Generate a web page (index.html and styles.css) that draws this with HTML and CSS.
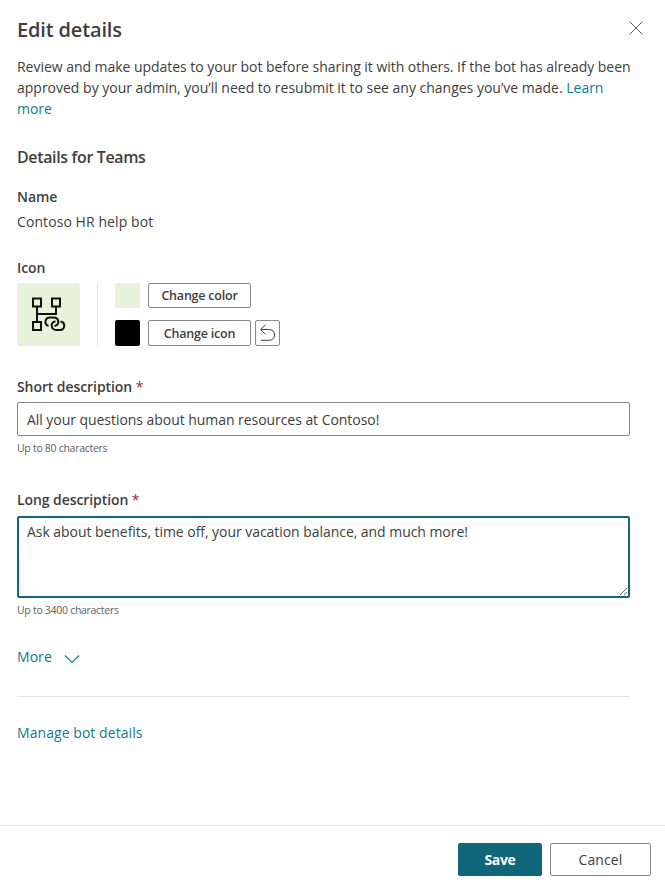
FILE: index.html
```html
<!DOCTYPE html>
<html lang="en">
<head>
<meta charset="utf-8">
<title>Edit details</title>
<link rel="stylesheet" href="styles.css">
</head>
<body>
<div class="panel">
  <main class="content">
    <header class="header">
      <h1 class="title">Edit details</h1>
      <button class="close" aria-label="Close"><svg width="14" height="14" viewBox="0 0 14 14"><path d="M.7.7l12.6 12.6M13.3.7L.7 13.3"/></svg></button>
    </header>
    <p class="intro"><span class="line-one">Review and make updates to your bot before sharing it with others. If the bot has already been</span><br><span class="line-two">approved by your admin, you’ll need to resubmit it to see any changes you’ve made. <a href="#">Learn</a></span><br><a href="#">more</a></p>
    <h2 class="section-title">Details for Teams</h2>
    <h3 class="label name-label">Name</h3>
    <p class="value">Contoso HR help bot</p>
    <h3 class="label icon-label">Icon</h3>
    <div class="icon-row">
      <div class="bot-icon">
        <svg width="36" height="36" viewBox="0 0 36 36">
          <path d="M2 1.500h8V9.500H2zM21 1.500h8V9.500h-8zM2 25h8v8H2zM6 9.500V25M6 17h19V9.500"/>
          <path d="M17.500 29C13 27.500 13.500 20.500 19 20.500h3.500c6 0 6.500 8 1 8.500"/>
          <path d="M29.500 24.500c5.500 1 4.500 8.500-.5 8.500h-3.500c-6 0-6.500-8.500-1-8.500"/>
        </svg>
      </div>
      <div class="icon-actions">
        <div class="action"><span class="swatch green"></span><button class="button small color-button">Change color</button></div>
        <div class="action"><span class="swatch black"></span><button class="button small icon-button">Change icon</button><button class="button undo" aria-label="Reset icon"><svg width="17" height="18" viewBox="0 0 17 18"><path d="M6.500.700L1.700 5.500l4.800 4.800M2 5.500h8.300c7 0 7 10.800 0 10.800H2"/></svg></button></div>
      </div>
    </div>
    <label class="label short-label" for="short">Short description <span class="required">*</span></label>
    <input class="field short-field" id="short" value="All your questions about human resources at Contoso!">
    <p class="hint">Up to 80 characters</p>
    <label class="label long-label" for="long">Long description <span class="required">*</span></label>
    <textarea class="field long-field" id="long">Ask about benefits, time off, your vacation balance, and much more!</textarea>
    <p class="hint long-hint">Up to 3400 characters</p>
    <a class="more" href="#">More<svg width="16" height="10" viewBox="0 0 16 10"><path d="M1 1.500l7 7 7-7"/></svg></a>
    <div class="divider"></div>
    <a class="manage" href="#">Manage bot details</a>
  </main>
  <footer class="footer">
    <button class="button save">Save</button>
    <button class="button cancel">Cancel</button>
  </footer>
</div>
</body>
</html>
```

FILE: styles.css
```css
* { box-sizing: border-box; }
body {
  margin: 0;
  background: #fff;
  color: #403e3d;
  font: 14px/21px "Open Sans", "Noto Sans", sans-serif;
  letter-spacing: -0.05px;
}
h1, h2, h3, p { margin: 0; }
a { color: #0f7b90; text-decoration: none; }
button, input, textarea { font: inherit; color: inherit; letter-spacing: inherit; }
svg { display: block; fill: none; stroke: currentColor; }
.panel { height: 887px; display: flex; flex-direction: column; overflow: hidden; }
.content { flex: 1; display: flex; flex-direction: column; padding: 14px 35px 0 17px; }
.header { display: flex; height: 42px; justify-content: space-between; margin-right: -13px; }
.title { font-size: 20px; line-height: 31px; font-weight: 600; letter-spacing: -0.15px; }
.close { width: 14px; height: 14px; margin-top: 7px; padding: 0; border: 0; background: none; color: #605e5c; }
.intro { white-space: nowrap; }
.line-one { letter-spacing: -0.035px; }
.line-two { letter-spacing: -0.005px; }
.section-title { margin-top: 27px; font-size: 16px; line-height: 22px; font-weight: 600; letter-spacing: -0.36px; }
.label { font-size: 14px; line-height: 20px; font-weight: 600; letter-spacing: -0.08px; }
.name-label { margin-top: 19px; }
.value { margin-top: 4px; letter-spacing: 0.08px; }
.icon-label { margin-top: 26px; }
.icon-row { display: flex; margin-top: 5px; height: 63px; }
.bot-icon { width: 63px; border-radius: 2px; background: #e6f2d9; padding: 14px; color: #111; }
.bot-icon svg { stroke-width: 2; }
.icon-actions { margin-left: 17px; padding-left: 17px; border-left: 1px solid #e5e5e5; display: flex; flex-direction: column; justify-content: space-between; }
.action { display: flex; align-items: center; }
.swatch { width: 25px; height: 25px; border-radius: 2px; margin-right: 8px; }
.green { background: #e6f2d9; }
.black { height: 26px; background: #000; }
.button { border: 1px solid #8a8886; border-radius: 2px; background: #fff; padding: 0; }
.small { width: 103px; height: 25px; font-size: 12.5px; line-height: 20px; font-weight: 600; letter-spacing: -0.22px; }
.icon-button { height: 26px; padding-top: 1px; }
.undo { width: 25px; height: 26px; margin-left: 4px; display: flex; align-items: center; justify-content: center; }
.short-label { margin-top: 31px; }
.required { color: #a4262c; font-weight: 400; }
.field { display: block; width: 100%; border-radius: 2px; background: #fff; outline: 0; }
.short-field { margin-top: 5px; height: 34px; border: 1px solid #8a8886; padding: 0 9px; }
.hint { margin-top: 4px; font-size: 10.5px; line-height: 16px; color: #605e5c; letter-spacing: -0.29px; }
.long-label { margin-top: 34px; }
.long-field { margin-top: 6px; height: 82px; border: 2px solid #0f6779; padding: 4px 8px; line-height: 20px; resize: vertical; }
.more { display: flex; align-items: center; align-self: flex-start; gap: 12px; margin-top: 28px; letter-spacing: 0.05px; }
.more svg { margin-top: 4px; stroke-width: 1.2; }
.divider { height: 1px; margin-top: 29px; background: #e5e5e5; }
.manage { align-self: flex-start; margin-top: 25px; letter-spacing: 0.06px; }
.footer { height: 62px; border-top: 1px solid #e5e5e5; display: flex; justify-content: flex-end; gap: 8px; padding: 17px 14px 0 0; }
.save, .cancel { height: 33px; }
.save { width: 84px; background: #0f6779; border-color: #0f6779; color: #fff; font-weight: 700; letter-spacing: -0.3px; }
.cancel { width: 101px; letter-spacing: 0.1px; }
```
